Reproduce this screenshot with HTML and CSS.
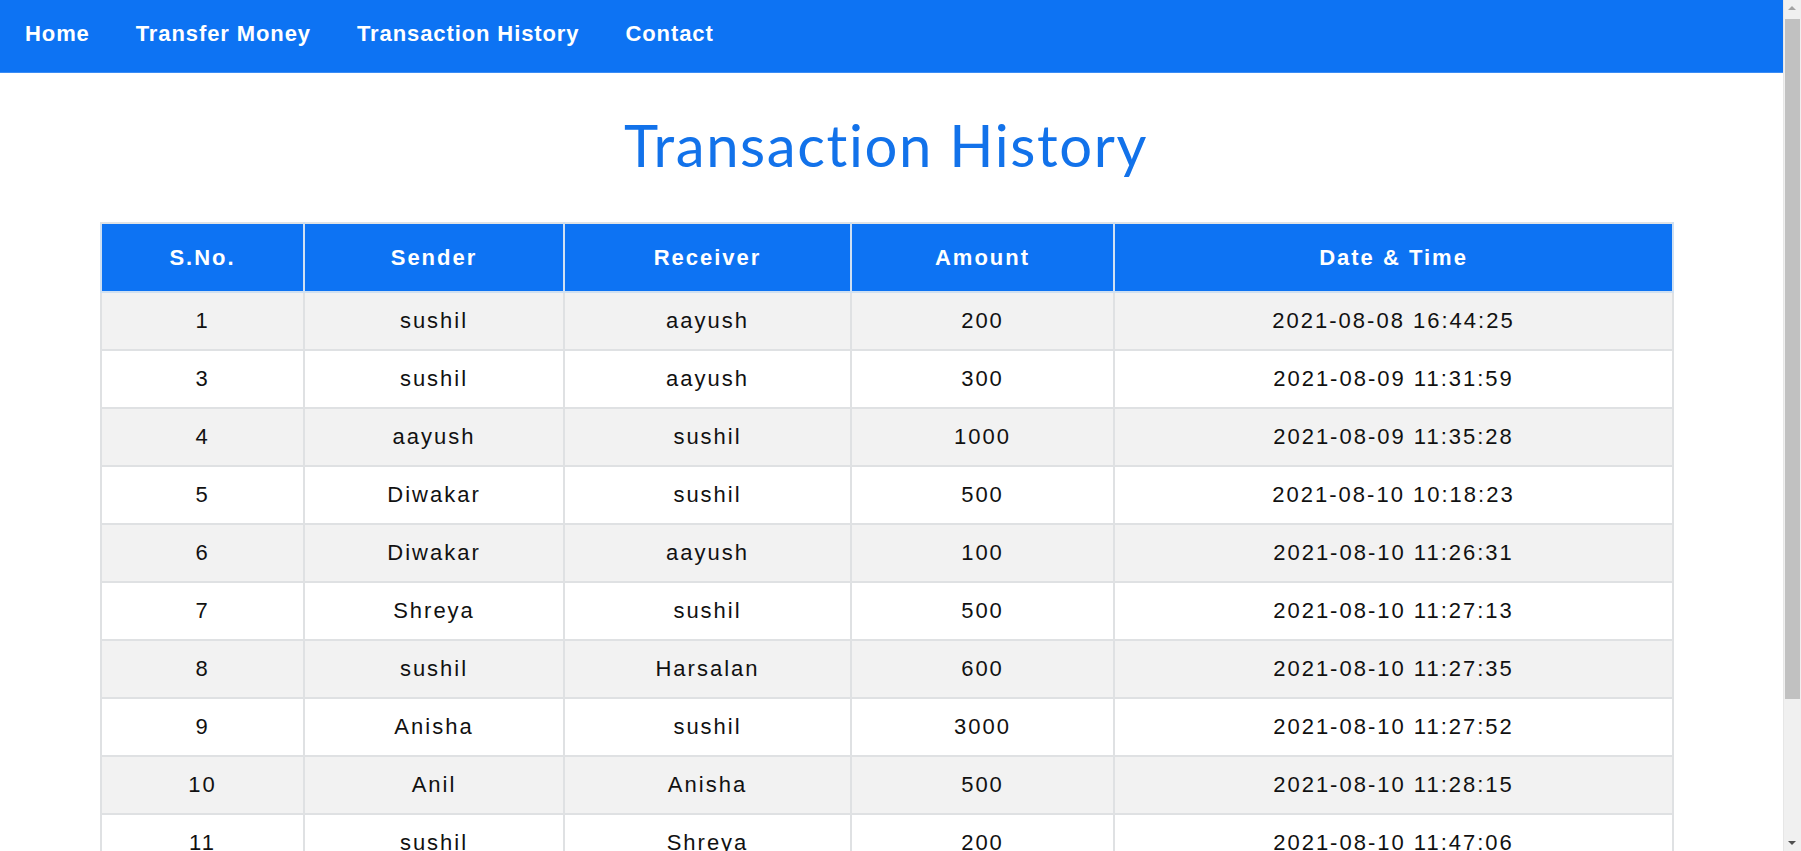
FILE: index.html
```html
<!DOCTYPE html>
<html>
<head>
<meta charset="utf-8">
<title>Transaction History</title>
<link rel="stylesheet" href="styles.css">
</head>
<body>
<nav class="navbar">
  <a class="nav-link" href="#">Home</a>
  <a class="nav-link" href="#">Transfer Money</a>
  <a class="nav-link" href="#">Transaction History</a>
  <a class="nav-link" href="#">Contact</a>
</nav>
<main class="content">
  <h1 class="title">Transaction History</h1>
  <table class="history">
    <thead>
      <tr>
        <th class="col-sno">S.No.</th>
        <th class="col-sender">Sender</th>
        <th class="col-receiver">Receiver</th>
        <th class="col-amount">Amount</th>
        <th class="col-date">Date &amp; Time</th>
      </tr>
    </thead>
    <tbody>
      <tr><td>1</td><td>sushil</td><td>aayush</td><td>200</td><td>2021-08-08 16:44:25</td></tr>
      <tr><td>3</td><td>sushil</td><td>aayush</td><td>300</td><td>2021-08-09 11:31:59</td></tr>
      <tr><td>4</td><td>aayush</td><td>sushil</td><td>1000</td><td>2021-08-09 11:35:28</td></tr>
      <tr><td>5</td><td>Diwakar</td><td>sushil</td><td>500</td><td>2021-08-10 10:18:23</td></tr>
      <tr><td>6</td><td>Diwakar</td><td>aayush</td><td>100</td><td>2021-08-10 11:26:31</td></tr>
      <tr><td>7</td><td>Shreya</td><td>sushil</td><td>500</td><td>2021-08-10 11:27:13</td></tr>
      <tr><td>8</td><td>sushil</td><td>Harsalan</td><td>600</td><td>2021-08-10 11:27:35</td></tr>
      <tr><td>9</td><td>Anisha</td><td>sushil</td><td>3000</td><td>2021-08-10 11:27:52</td></tr>
      <tr><td>10</td><td>Anil</td><td>Anisha</td><td>500</td><td>2021-08-10 11:28:15</td></tr>
      <tr><td>11</td><td>sushil</td><td>Shreya</td><td>200</td><td>2021-08-10 11:47:06</td></tr>
      <tr><td>12</td><td>Shreya</td><td>Anil</td><td>400</td><td>2021-08-10 11:52:10</td></tr>
    </tbody>
  </table>
</main>
<div class="scrollbar">
  <div class="sb-arrow sb-up"></div>
  <div class="sb-thumb"></div>
  <div class="sb-arrow sb-down"></div>
</div>
</body>
</html>
```

FILE: styles.css
```css
html {
  overflow: hidden;
}
body {
  margin: 0;
  background: #ffffff;
  font-family: "Liberation Sans", Arial, sans-serif;
  width: 1783px;
}
.navbar {
  display: flex;
  align-items: flex-start;
  height: 72px;
  background: #0d73f3;
  border-bottom: 1px solid #3a8cf5;
  padding-left: 2px;
}
.nav-link {
  color: #ffffff;
  text-decoration: none;
  font-weight: bold;
  font-size: 22px;
  letter-spacing: 0.9px;
  padding: 21px 23px 0 23px;
  line-height: 25px;
}
.content {
  margin-left: 100px;
  width: 1572px;
}
.title {
  margin: 0;
  padding-top: 37px;
  height: 149px;
  box-sizing: border-box;
  text-align: center;
  font-family: Lato, "Open Sans", sans-serif;
  font-weight: normal;
  font-size: 58px;
  line-height: 70px;
  color: #1272ea;
  letter-spacing: 1.6px;
}
.history {
  width: 1562px;
  border-collapse: collapse;
  table-layout: fixed;
  border: 2px solid #dfe3e6;
}
.history th {
  background: #0d73f3;
  color: #ffffff;
  font-weight: bold;
  font-size: 22px;
  letter-spacing: 2px;
  height: 67px;
  padding: 0;
  border: 2px solid #cfe0f2;
  border-top-color: #dfe3e6;
  text-align: center;
}
.col-sno { width: 201px; }
.col-sender { width: 258px; }
.col-receiver { width: 285px; }
.col-amount { width: 261px; }
.col-date { width: 557px; }
.history td {
  font-size: 22px;
  letter-spacing: 2px;
  color: #111111;
  text-align: center;
  height: 56px;
  padding: 0;
  border: 2px solid #dfe1e3;
}
.history tbody tr:nth-child(odd) {
  background: #f2f2f2;
}
.history tbody tr:nth-child(even) {
  background: #ffffff;
}
.scrollbar {
  position: fixed;
  top: 0;
  right: 0;
  width: 17px;
  height: 851px;
  background: #f0f0f0;
  display: flex;
  flex-direction: column;
  border-left: 1px solid #e6e6e6;
}
.sb-arrow {
  height: 17px;
  position: relative;
}
.sb-up::after,
.sb-down::after {
  content: "";
  position: absolute;
  left: 4px;
  border-left: 4px solid transparent;
  border-right: 4px solid transparent;
}
.sb-up::after {
  top: 6px;
  border-bottom: 4px solid #a3a3a3;
}
.sb-down::after {
  top: 7px;
  border-top: 4px solid #505050;
}
.sb-thumb {
  margin: 2px 0 0 1px;
  width: 15px;
  height: 680px;
  background: #c1c1c1;
}
.sb-down {
  margin-top: auto;
}
```
